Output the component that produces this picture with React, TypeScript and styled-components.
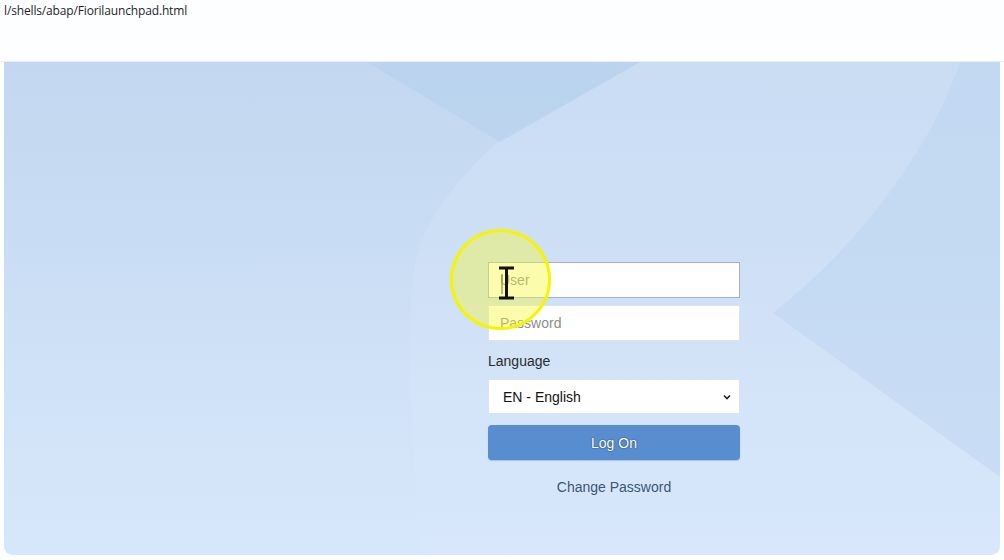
import React from "react";
import styled, { createGlobalStyle } from "styled-components";

const Global = createGlobalStyle`
  html, body { margin: 0; padding: 0; background: #fdfeff; }
  body { font-family: "Liberation Sans", Arial, sans-serif; }
  * { box-sizing: border-box; }
`;

const Page = styled.div`
  width: 1004px;
  height: 560px;
  display: flex;
  flex-direction: column;
  overflow: hidden;
  background: #fdfeff;
`;

const AddressBar = styled.div`
  height: 62px;
  padding: 3px 0 0 4px;
  font-family: "Open Sans", "Noto Sans", sans-serif;
  font-size: 12px;
  letter-spacing: -0.15px;
  line-height: 16px;
  color: #1f1f1f;
  border-bottom: 1px solid #e9eef4;
`;

const Panel = styled.div`
  position: relative;
  margin: 0 4px;
  height: 493px;
  border-radius: 0 0 9px 9px;
  overflow: hidden;
  background: linear-gradient(180deg, #c3d8f0 0%, #c8dcf3 35%, #d1e3f8 70%, #d7e7fb 100%);
`;

const Backdrop = styled.svg`
  position: absolute;
  inset: 0;
  width: 100%;
  height: 100%;
`;

const FormArea = styled.div`
  position: relative;
  display: flex;
  padding: 200px 0 0 484px;
`;

const Form = styled.form`
  width: 252px;
  display: flex;
  flex-direction: column;
  margin: 0;
`;

const Field = styled.input<{ $focused?: boolean }>`
  height: 36px;
  width: 100%;
  margin: 0 0 7px 0;
  padding: 0 11px;
  font-family: "Liberation Sans", Arial, sans-serif;
  font-size: 14px;
  color: #222;
  background: #ffffff;
  border: 1px solid ${(p) => (p.$focused ? "#9fb3c9" : "#dbe3ec")};
  border-radius: 0;
  outline: none;
  &::placeholder { color: #8c8c8c; }
`;

const Label = styled.label`
  display: block;
  height: 31px;
  line-height: 26px;
  font-size: 14px;
  color: #2b2b2b;
`;

const Select = styled.div`
  height: 35px;
  display: flex;
  align-items: center;
  justify-content: space-between;
  padding: 0 6px 0 14px;
  background: #fff;
  border: 1px solid #dbe3ec;
  font-size: 14px;
  color: #111;
`;

const Button = styled.button`
  margin-top: 11px;
  height: 35px;
  width: 100%;
  border: none;
  border-radius: 4px;
  background: #588ecf;
  color: #fff;
  font-family: "Liberation Sans", Arial, sans-serif;
  font-size: 14px;
  text-shadow: 0 0 1.5px rgba(0, 0, 0, 0.75);
  box-shadow: 0 1px 1px rgba(40, 80, 130, 0.25);
`;

const LinkText = styled.a`
  margin-top: 19px;
  line-height: 16px;
  text-align: center;
  font-size: 14px;
  color: #3a5673;
  text-decoration: none;
`;

const Highlight = styled.div`
  position: absolute;
  left: 446px;
  top: 167px;
  width: 101px;
  height: 101px;
  border-radius: 50%;
  border: 3px solid #f8f400;
  background: rgba(248, 248, 60, 0.42);
  pointer-events: none;
`;

const Cursor = styled.svg`
  position: absolute;
  left: 493px;
  top: 204px;
  pointer-events: none;
`;

export default function App() {
  return (
    <>
      <Global />
      <Page>
        <AddressBar>l/shells/abap/Fiorilaunchpad.html</AddressBar>
        <Panel>
          <Backdrop viewBox="0 0 996 493" preserveAspectRatio="none">
            <path d="M496 78 C460 110 425 150 413 193 C404 240 404 300 408 360 C410 420 414 460 416 493 L996 493 L996 0 L636 0 Z" fill="#dbe9fc" opacity="0.3" />
            <path d="M363 0 L636 0 L496 80 Z" fill="#b6d0ec" opacity="0.6" />
            <path d="M956 0 C930 80 860 180 769 251 L996 415 L996 0 Z" fill="#bcd4ef" opacity="0.5" />
          </Backdrop>
          <FormArea>
            <Form onSubmit={(e) => e.preventDefault()}>
              <Field $focused placeholder="User" />
              <Field placeholder="Password" type="password" />
              <Label>Language</Label>
              <Select>
                <span>EN - English</span>
                <svg width="12" height="12" viewBox="0 0 12 12">
                  <path d="M3 4.5 L6 7.5 L9 4.5" fill="none" stroke="#222" strokeWidth="1.6" />
                </svg>
              </Select>
              <Button type="button">Log On</Button>
              <LinkText>Change Password</LinkText>
            </Form>
          </FormArea>
          <Highlight />
          <Cursor width="20" height="34" viewBox="0 0 20 34">
            <path d="M2 2 H17 M9.5 2 V32 M2 32 H17" stroke="#111" strokeWidth="3" fill="none" />
            <path d="M5 8 V28" stroke="#7a7a40" strokeWidth="1" />
          </Cursor>
        </Panel>
      </Page>
    </>
  );
}
